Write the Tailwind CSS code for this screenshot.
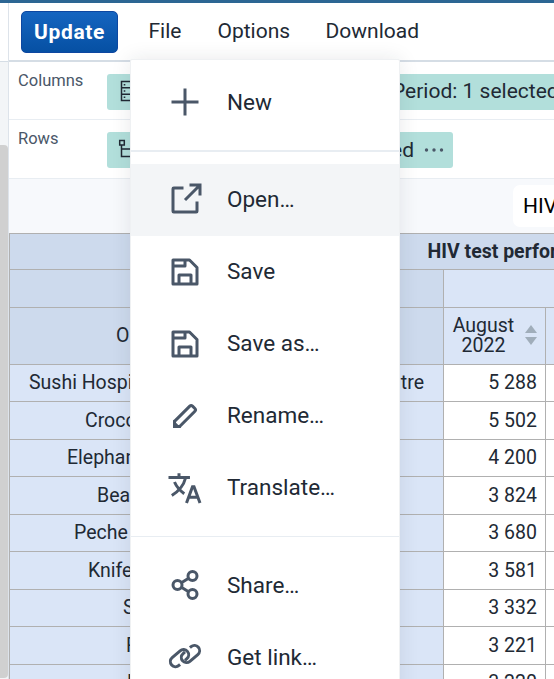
<!DOCTYPE html>
<html lang="en"><head><meta charset="utf-8"><title>Data Visualizer</title>
<script src="https://cdn.jsdelivr.net/npm/@tailwindcss/browser@4"></script></head>
<body class="font-[Roboto,sans-serif] text-[#212934] bg-white">
<div class="relative w-[554px] h-[679px] overflow-hidden flex flex-col">
  <div class="h-[3px] shrink-0 bg-[#2c6693]"></div>
  <div class="flex flex-1 min-h-0">
    <aside class="w-[9px] shrink-0 border-r border-[#dde3ea] flex flex-col bg-[#f3f5f7]">
      <div class="h-[59px] bg-white border-b border-[#d5dde5] shrink-0"></div>
      <div class="mt-[83px] h-[533px] bg-[#d0d0d0] rounded-r-[4px]"></div>
    </aside>
    <main class="w-[545px] shrink-0 flex flex-col">
      <nav class="h-[59px] shrink-0 border-b-2 border-[#d5dde5] flex items-center pl-3 text-[21px] leading-[26px]">
        <button class="w-[97px] h-[42px] rounded-[5px] border border-[#0d47a1] bg-linear-to-b from-[#1565c0] to-[#0650a3] text-white font-bold tracking-[0.6px]">Update</button>
        <span class="ml-[30.5px] w-[69px] pb-[2px]">File</span><span class="w-[108px] pb-[2px]">Options</span><span class="pb-[2px]">Download</span>
      </nav>
      <div class="h-[58px] shrink-0 border-b border-[#e8edf2] flex pt-3 text-[21px]">
        <span class="w-[98px] shrink-0 pl-[9px] text-[16.5px] leading-[14px] text-[#4a5768]">Columns</span>
        <div class="w-[100px] shrink-0 h-9 rounded-[3px] bg-[#b2dfdb] pl-[9px] flex items-center">
          <svg class="size-6" viewBox="0 0 24 24" fill="none" stroke="#212934" stroke-width="1.5"><path d="M5.500 1.500h15v19h-15zM5.500 7.800h15M5.500 14.200h15"/><path d="M7.700 4.700h1.600M7.700 11h1.600M7.700 17.300h1.600"/></svg>
        </div>
        <div class="ml-[156px] w-[220px] shrink-0 h-9 rounded-[3px] bg-[#b2dfdb] pl-[29px] leading-[34px] whitespace-nowrap">Period: 1 selected</div>
      </div>
      <div class="h-[59px] shrink-0 border-b border-[#e8edf2] flex pt-3 text-[21px]">
        <span class="w-[98px] pl-[9px] text-[16.5px] leading-[14px] text-[#4a5768]">Rows</span>
        <div class="w-[346px] h-9 rounded-[3px] bg-[#b2dfdb] pl-[9px] pr-[9px] flex items-center justify-between">
          <svg class="size-6" viewBox="0 0 24 24" fill="none" stroke="#212934" stroke-width="1.5"><path d="M3.700 2.500h4.600v4.600H3.700zM5.500 7v11.500h14M5.500 11h14"/></svg>
          <span class="flex items-center gap-[10px]"><span class="pt-px">1 selected</span>
          <svg class="w-5 h-6" viewBox="0 0 20 24" fill="#4a5768"><circle cx="2.500" cy="12" r="1.700"/><circle cx="10" cy="12" r="1.700"/><circle cx="17.500" cy="12" r="1.700"/></svg></span>
        </div>
      </div>
      <div class="h-[54px] shrink-0 bg-[#f7f9fc] pt-[6px] pl-[504px]"><div class="h-[42px] w-[200px] rounded-[7px] bg-white pl-[10px] leading-[42px] text-[21px] text-black">HIV</div></div>
      <div class="w-[640px] text-[19.5px] border-l border-t border-[#b0b0b0]">
        <div class="h-9 bg-[#cddaed] border-b border-[#b0b0b0] pl-[417.500px] leading-[35px] font-bold whitespace-nowrap">HIV test performed</div>
        <div class="flex h-[38px]"><div class="w-[434px] bg-[#cddaed] border-r border-b border-[#b0b0b0]"></div><div class="flex-1 bg-[#dae5f7] border-b border-[#b0b0b0]"></div></div>
        <div class="flex h-[57px]">
          <div class="w-[434px] bg-[#cddaed] border-r border-b border-[#b0b0b0] pl-[106px] leading-[56px]">Organisation unit</div>
          <div class="w-[102px] bg-[#dae5f7] border-r border-b border-[#b0b0b0] flex items-center pl-2"><span class="w-[63px] text-center leading-5">August 2022</span>
            <svg class="ml-[10px] mb-[2px] w-3 h-5" viewBox="0 0 12 20" fill="#a0adba"><path d="M6 0l6 8H0zM0 12h12l-6 8z"/></svg></div>
          <div class="flex-1 bg-[#dae5f7] border-b border-[#b0b0b0]"></div>
        </div>
        <div id="rows"></div>
      </div>
    </main>
  </div>

  <div class="absolute left-[130px] top-[59px] w-[270px] h-[650px] bg-white border border-[#eff1f3] rounded-t-[2px] shadow-[0_0_20px_rgba(33,41,52,0.10)] pt-[6px] text-[22.5px]">
    <div class="h-[72px] flex items-center pl-9 gap-6"><svg class="size-9" viewBox="0 0 24 24" fill="none" stroke="#4a5768" stroke-width="2"><path d="M12 3v18M3 12h18"/></svg><span class="pt-[2px]">New</span></div>
    <div class="h-[2px] bg-[#e8edf2] my-3"></div>
    <div class="h-[72px] flex items-center pl-9 gap-6 bg-[#f3f5f7]"><svg class="size-9" viewBox="0 0 24 24" fill="none" stroke="#4a5768" stroke-width="2"><path d="M11 4H4.500a.5.5 0 0 0-.5.5v15a.5.5 0 0 0 .5.5h15a.5.5 0 0 0 .5-.5V13M15 2h7v7M22 2L12 12"/></svg><span>Open…</span></div>
    <div class="h-[72px] flex items-center pl-9 gap-6"><svg class="size-9" viewBox="0 0 24 24" fill="none" stroke="#4a5768" stroke-width="2" stroke-linejoin="round"><path d="M4 4h11l5 5v11H4zM4 8h8V4M8 20v-6h8v6"/></svg><span>Save</span></div>
    <div class="h-[72px] flex items-center pl-9 gap-6"><svg class="size-9" viewBox="0 0 24 24" fill="none" stroke="#4a5768" stroke-width="2" stroke-linejoin="round"><path d="M4 4h11l5 5v11H4zM4 8h8V4M8 20v-6h8v6"/></svg><span>Save as…</span></div>
    <div class="h-[72px] flex items-center pl-9 gap-6"><svg class="size-9" viewBox="0 0 24 24" fill="none" stroke="#4a5768" stroke-width="2"><path d="M5 15.600L15.200 5.400a1.300 1.300 0 0 1 1.800 0l1.600 1.600a1.300 1.300 0 0 1 0 1.800L8.400 19H5z"/><path d="M4 14.500L9.500 20H4z" fill="#4a5768" stroke="none"/></svg><span>Rename…</span></div>
    <div class="h-[72px] flex items-center pl-9 gap-6"><svg class="size-9" viewBox="0 0 24 24" fill="none" stroke="#4a5768" stroke-width="2"><path d="M1 5h14.300M8 2.200V5M12.300 5.500C11.200 10 8 14 3.200 17M5 8c1.300 3 3.500 5.600 6.500 7.800" stroke-width="2"/><path d="M13 22l4-10.800h1L22 22M14.500 18.200h6"/></svg><span>Translate…</span></div>
    <div class="h-px bg-[#e8edf2] my-3"></div>
    <div class="h-[72px] flex items-center pl-9 gap-6"><svg class="size-9" viewBox="0 0 24 24" fill="none" stroke="#4a5768" stroke-width="2"><circle cx="7" cy="12" r="3"/><circle cx="17" cy="6" r="3"/><circle cx="17" cy="18" r="3"/><path d="M9.600 10.500l4.800-3M9.600 13.500l4.800 3"/></svg><span class="pt-[2px]">Share…</span></div>
    <div class="h-[72px] flex items-center pl-9 gap-6"><svg class="size-9" viewBox="0 0 24 24" fill="none" stroke="#4a5768" stroke-width="2"><path d="M8.700 17L7.950 17.650A3.410 3.410 0 0 1 3.450 12.450L8.750 7.900A3.410 3.410 0 0 1 13.250 13.100L12 14.200"/><path transform="rotate(180 12 11.400)" d="M8.700 17L7.950 17.650A3.410 3.410 0 0 1 3.450 12.450L8.750 7.900A3.410 3.410 0 0 1 13.250 13.100L12 14.200"/></svg><span class="pt-[2px]">Get link…</span></div>
  </div>
</div>
<script>
const rows=[["Sushi Hospital Medical Centre",19,"5 288"],["Crocodile",75,"5 502"],["Elephant",57,"4 200"],["Bear",87,"3 824"],["Peche",64,"3 680"],["Knife",78,"3 581"],["S",113,"3 332"],["R",116,"3 221"],["H",117,"3 220"]];
document.getElementById("rows").innerHTML=rows.map((r,i)=>`<div class="flex ${i%2?'h-[38px] leading-[37px]':'h-[37px] leading-[35px]'} whitespace-nowrap"><div class="w-[434px] bg-[#dae5f7] border-r border-b border-[#b0b0b0] flex justify-between pr-[19px]" style="padding-left:${r[1]}px"><span>${r[0]}</span>${i?'':'<span>Centre</span>'}</div><div class="w-[102px] border-r border-b border-[#b0b0b0] text-right pr-2 bg-white">${r[2]}</div><div class="flex-1 border-b border-[#b0b0b0] bg-white"></div></div>`).join("");
</script>
</body></html>
